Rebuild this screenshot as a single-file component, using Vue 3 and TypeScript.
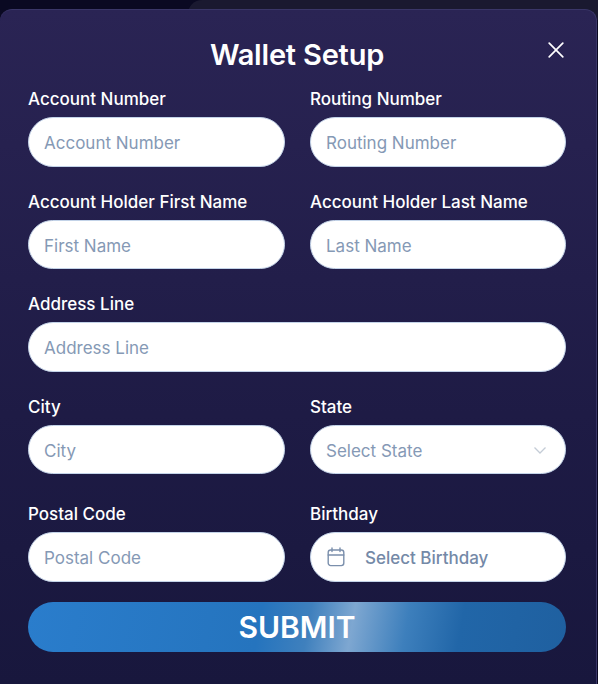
<script setup lang="ts">
interface Field { label: string; placeholder: string; wide?: boolean; kind?: 'select' | 'date' }
const fields: Field[] = [
  { label: 'Account Number', placeholder: 'Account Number' },
  { label: 'Routing Number', placeholder: 'Routing Number' },
  { label: 'Account Holder First Name', placeholder: 'First Name' },
  { label: 'Account Holder Last Name', placeholder: 'Last Name' },
  { label: 'Address Line', placeholder: 'Address Line', wide: true },
  { label: 'City', placeholder: 'City' },
  { label: 'State', placeholder: 'Select State', kind: 'select' },
  { label: 'Postal Code', placeholder: 'Postal Code' },
  { label: 'Birthday', placeholder: 'Select Birthday', kind: 'date' },
]
</script>

<template>
  <div class="page">
    <div class="backdrop-card"></div>
    <section class="panel">
      <header class="head">
        <h1>Wallet Setup</h1>
        <button class="close" type="button" aria-label="Close">
          <svg width="16" height="16" viewBox="0 0 16 16" fill="none" stroke="#fff" stroke-width="1.7" stroke-linecap="round">
            <path d="M1.2 1.2 L14.8 14.8 M14.8 1.2 L1.2 14.8" />
          </svg>
        </button>
      </header>
      <form class="grid" @submit.prevent>
        <div v-for="f in fields" :key="f.label" class="field" :class="{ wide: f.wide, postal: f.label === 'Postal Code', birthday: f.kind === 'date' }">
          <label>{{ f.label }}</label>
          <div class="input" :class="{ date: f.kind === 'date' }">
            <svg v-if="f.kind === 'date'" class="cal" width="18" height="20" viewBox="0 0 18 20" fill="none" stroke="#7b8fac" stroke-width="1.4" stroke-linecap="round">
              <rect x="1.2" y="3" width="15.6" height="15.6" rx="2.5" />
              <path d="M1.2 8 H16.8 M5 1 V4.6 M13 1 V4.6" />
            </svg>
            <span>{{ f.placeholder }}</span>
            <svg v-if="f.kind === 'select'" class="chev" width="14" height="9" viewBox="0 0 14 9" fill="none" stroke="#c4ccd6" stroke-width="1.3">
              <path d="M1.5 1.5 L7 7 L12.5 1.5" />
            </svg>
          </div>
        </div>
        <button class="submit" type="button">SUBMIT</button>
      </form>
    </section>
  </div>
</template>

<style scoped>
.page {
  position: relative;
  width: 598px;
  height: 684px;
  background: #0a0922;
  overflow: hidden;
  padding-top: 9px;
  box-sizing: border-box;
  font-family: Inter, "Noto Sans", sans-serif;
}
.backdrop-card {
  position: absolute;
  left: 188px;
  top: 0;
  width: 410px;
  height: 20px;
  border-radius: 14px 0 0 0;
  background: #1a1930;
}
.panel {
  position: relative;
  width: 597px;
  height: 675px;
  box-sizing: border-box;
  border: 1px solid #3a3668;
  border-bottom: none;
  border-left: none;
  border-radius: 12px 12px 0 0;
  background: linear-gradient(180deg, #2a2454 0%, #1e1b45 60%, #18173d 100%);
  padding: 0 30px 0 28px;
}
.head {
  position: relative;
  height: 70px;
  display: flex;
  justify-content: center;
}
h1 {
  margin: 27px 0 0;
  font-size: 29px;
  line-height: 36px;
  font-weight: 600;
  color: #fff;
  letter-spacing: -0.2px;
}
.close {
  position: absolute;
  right: 2px;
  top: 32px;
  padding: 0;
  border: 0;
  background: none;
  width: 16px;
  height: 16px;
}
.grid {
  display: grid;
  grid-template-columns: 257px 256px;
  column-gap: 25px;
  row-gap: 25px;
  margin-top: 9px;
}
.field { display: flex; flex-direction: column; }
.field.wide { grid-column: 1 / -1; }
.field.postal, .field.birthday { margin-top: 5px; }
label {
  display: block;
  height: 20px;
  font-size: 17px;
  line-height: 20px;
  font-weight: 500;
  color: #fff;
  margin-bottom: 8px;
  white-space: nowrap;
}
.input {
  height: 49.5px;
  box-sizing: border-box;
  border: 1px solid #c3d3e8;
  border-radius: 25px;
  background: #fff;
  padding: 3px 15px 0;
  display: flex;
  align-items: center;
  justify-content: space-between;
  font-size: 17px;
  color: #8599b5;
}
.input.date {
  justify-content: flex-start;
  gap: 20px;
  padding-left: 16px;
  padding-top: 0;
  color: #7489a7;
  font-weight: 500;
  font-size: 17px;
}
.input.date span { padding-top: 3px; }
.chev { margin-right: 3px; }
.submit {
  grid-column: 1 / -1;
  margin-top: -5px;
  height: 50px;
  border: 0;
  border-radius: 25px;
  color: #fff;
  font-family: inherit;
  font-size: 30px;
  font-weight: 600;
  letter-spacing: 0;
  background: linear-gradient(100deg, #2a7dcc 0%, #2574be 43%, #3f80bd 52%, #7ea7d1 60%, #3d7fbc 70%, #2166a8 80%, #1f60a0 100%);
}
</style>
